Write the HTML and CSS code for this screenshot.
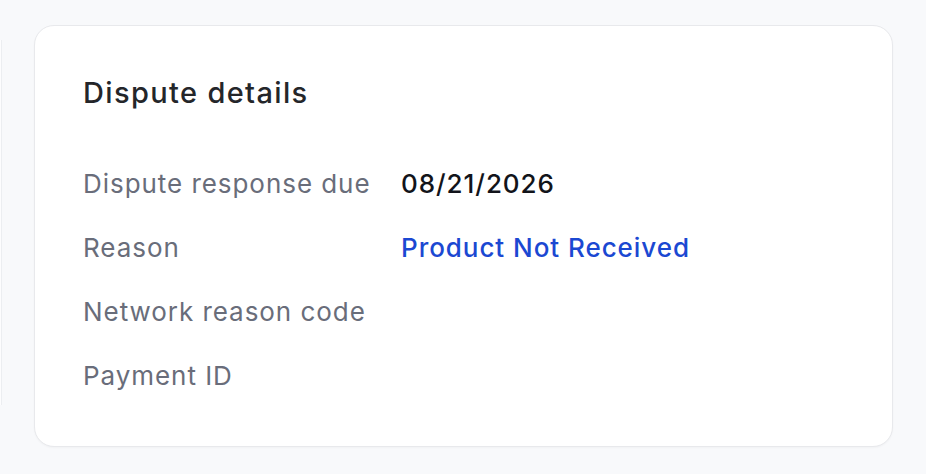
FILE: index.html
```html
<!DOCTYPE html>
<html lang="en">
<head>
    <meta charset="UTF-8">
    <meta name="viewport" content="width=device-width, initial-scale=1.0">
    <title>Dispute details</title>
    <link rel="stylesheet" href="styles.css">
</head>
<body>
    <div class="page">
        <div class="side-edge"></div>

        <div class="card">
            <h2 class="card-title">Dispute details</h2>

            <div class="details">
                <div class="label">Dispute response due</div>
                <div class="value">08/21/2026</div>

                <div class="label">Reason</div>
                <div class="value link">Product Not Received</div>

                <div class="label">Network reason code</div>
                <div class="value"></div>

                <div class="label">Payment ID</div>
                <div class="value"></div>
            </div>
        </div>
    </div>
</body>
</html>
```

FILE: styles.css
```css
* {
    margin: 0;
    padding: 0;
    box-sizing: border-box;
}

body {
    font-family: Inter, 'Noto Sans', sans-serif;
    background: #f8f9fb;
    height: 100vh;
    overflow: hidden;
}

.page {
    display: flex;
    align-items: flex-start;
    gap: 32px;
    padding-top: 25px;
}

.side-edge {
    width: 2px;
    height: 365px;
    margin-top: 15px;
    background: #fdfdfe;
    border-right: 1px solid #eceef1;
}

.card {
    width: 859px;
    height: 422px;
    background: white;
    border: 1px solid #e8e9ec;
    border-radius: 20px;
    box-shadow: 0 1px 2px rgba(0,0,0,0.03);
    padding: 50px 48px 0 48px;
}

.card-title {
    font-size: 29px;
    line-height: 34px;
    font-weight: 500;
    letter-spacing: 1.35px;
    color: #24262a;
    margin-bottom: 56px;
}

.details {
    display: grid;
    grid-template-columns: 318px 1fr;
    row-gap: 28px;
    font-size: 26px;
    line-height: 36px;
    letter-spacing: 0.95px;
}

.label {
    color: #696d7a;
}

.value {
    color: #12141a;
    font-weight: 500;
}

.value.link {
    color: #1b48d2;
}
```
